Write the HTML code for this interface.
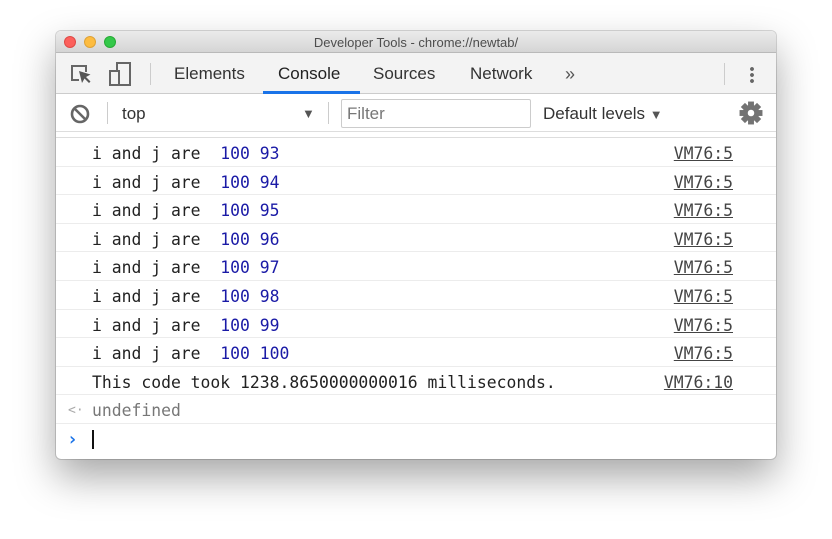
<!DOCTYPE html>
<html><head><meta charset="utf-8"><style>
*{margin:0;padding:0;box-sizing:border-box}
body{width:832px;height:539px;background:#fff;position:relative;overflow:hidden;font-family:"Liberation Sans",sans-serif}
.win{position:absolute;left:56px;top:31px;width:720px;height:428px;background:#fff;border-radius:5px;overflow:hidden;box-shadow:0 18px 40px rgba(0,0,0,.35),0 0 0 1px rgba(0,0,0,.15)}
.title{height:22px;background:linear-gradient(#ebebeb,#d5d5d5);border-bottom:1px solid #b9b9b9;text-align:center;font-size:13px;line-height:23px;color:#4d4d4d;position:relative}
.dot{position:absolute;top:5px;width:12px;height:12px;border-radius:50%}
.tabs{height:41px;background:#f3f3f3;border-bottom:1px solid #ccc;position:relative}
.tab{position:absolute;top:1px;height:40px;line-height:40px;font-size:17px;color:#333}
.tb{height:38px;border-bottom:1px solid #ddd;position:relative;background:#fff}
.row{position:absolute;left:0;width:720px;height:28.6px;border-bottom:1px solid #ececec;font-family:"DejaVu Sans Mono","Liberation Mono",monospace;font-size:16.4px;line-height:32px;color:#222;white-space:pre}
.row .t{position:absolute;left:36px}
.row .n{color:#1a1aa6}
.row .l{position:absolute;right:43px;text-decoration:underline;color:#444}
</style></head><body>
<div class="win">
 <div class="title">
  <div class="dot" style="left:8px;background:#fc605c;border:1px solid #de4a46"></div>
  <div class="dot" style="left:28px;background:#fdbc40;border:1px solid #dea236"></div>
  <div class="dot" style="left:48px;background:#34c84a;border:1px solid #27aa35"></div>
  Developer Tools - chrome://newtab/
 </div>
 <div class="tabs">
  <svg style="position:absolute;left:14px;top:10px" width="22" height="22" viewBox="0 0 22 22"><path d="M9 17H2V3h14v6" fill="none" stroke="#666" stroke-width="2"/><path d="M9 8l3 12 2.5-4.5L19 20l1.5-1.5-4.5-4.5 4.5-2.5z" fill="#555"/></svg>
  <svg style="position:absolute;left:52px;top:8px" width="24" height="26" viewBox="0 0 24 26"><rect x="9" y="2" width="13" height="22" fill="none" stroke="#666" stroke-width="2"/><rect x="2" y="10" width="9" height="14" fill="#f3f3f3" stroke="#666" stroke-width="2"/></svg>
  <div style="position:absolute;left:94px;top:10px;width:1px;height:22px;background:#ccc"></div>
  <div class="tab" style="left:118px">Elements</div>
  <div class="tab" style="left:222px;color:#222">Console</div>
  <div style="position:absolute;left:207px;top:38px;width:97px;height:3px;background:#1a73e8"></div>
  <div class="tab" style="left:317px">Sources</div>
  <div class="tab" style="left:414px">Network</div>
  <div class="tab" style="left:509px;font-size:18px;color:#555">»</div>
  <div style="position:absolute;left:668px;top:10px;width:1px;height:22px;background:#ccc"></div>
  <div style="position:absolute;left:694px;top:13px;width:4px;height:18px;background:radial-gradient(circle,#666 1.8px,transparent 2px) 0 0/4px 6px"></div>
 </div>
 <div class="tb">
  <svg style="position:absolute;left:14px;top:10px" width="20" height="20" viewBox="0 0 20 20"><circle cx="10" cy="10" r="8" fill="none" stroke="#666" stroke-width="2.6"/><path d="M4.5 4.5l11 11" stroke="#666" stroke-width="2.6"/></svg>
  <div style="position:absolute;left:51px;top:8px;width:1px;height:22px;background:#ccc"></div>
  <div style="position:absolute;left:66px;top:1px;line-height:38px;font-size:17px;color:#333">top</div>
  <div style="position:absolute;left:246px;top:1px;line-height:38px;font-size:13px;color:#555">▼</div>
  <div style="position:absolute;left:272px;top:8px;width:1px;height:22px;background:#ccc"></div>
  <div style="position:absolute;left:285px;top:5px;width:190px;height:29px;border:1px solid #ccc;border-radius:2px;font-size:17px;line-height:28px;padding-left:5px;color:#777">Filter</div>
  <div style="position:absolute;left:487px;top:1px;line-height:38px;font-size:17px;color:#333">Default levels <span style="font-size:13px;color:#555">▼</span></div>
  <svg style="position:absolute;left:683px;top:7px" width="24" height="24" viewBox="0 0 22 22"><g fill="#737373" transform="translate(11 11)"><circle r="7.5"/><rect x="-2.7" y="-10.5" width="5.4" height="21"/><rect x="-2.7" y="-10.5" width="5.4" height="21" transform="rotate(45)"/><rect x="-2.7" y="-10.5" width="5.4" height="21" transform="rotate(90)"/><rect x="-2.7" y="-10.5" width="5.4" height="21" transform="rotate(135)"/></g><circle cx="11" cy="11" r="3" fill="#fff"/></svg>
 </div>
 <div style="position:absolute;left:0;top:106px;width:720px;height:1px;background:#ddd"></div>
 <div class="row" style="top:107px"><span class="t">i and j are  <span class="n">100 93</span></span><span class="l">VM76:5</span></div>
 <div class="row" style="top:135.6px"><span class="t">i and j are  <span class="n">100 94</span></span><span class="l">VM76:5</span></div>
 <div class="row" style="top:164.2px"><span class="t">i and j are  <span class="n">100 95</span></span><span class="l">VM76:5</span></div>
 <div class="row" style="top:192.8px"><span class="t">i and j are  <span class="n">100 96</span></span><span class="l">VM76:5</span></div>
 <div class="row" style="top:221.4px"><span class="t">i and j are  <span class="n">100 97</span></span><span class="l">VM76:5</span></div>
 <div class="row" style="top:250px"><span class="t">i and j are  <span class="n">100 98</span></span><span class="l">VM76:5</span></div>
 <div class="row" style="top:278.6px"><span class="t">i and j are  <span class="n">100 99</span></span><span class="l">VM76:5</span></div>
 <div class="row" style="top:307.2px"><span class="t">i and j are  <span class="n">100 100</span></span><span class="l">VM76:5</span></div>
 <div class="row" style="top:335.8px"><span class="t">This code took 1238.8650000000016 milliseconds.</span><span class="l">VM76:10</span></div>
 <div class="row" style="top:364.4px;color:#777"><span style="position:absolute;left:12px;font-size:13px;color:#aaa">&lt;·</span><span class="t">undefined</span></div>
 <div class="row" style="top:393px;border:none"><span style="position:absolute;left:11px;color:#1a73e8;font-weight:bold;font-size:18px">›</span><span style="position:absolute;left:36px;top:6px;width:2px;height:19px;background:#111"></span></div>
</div>
</body></html>
